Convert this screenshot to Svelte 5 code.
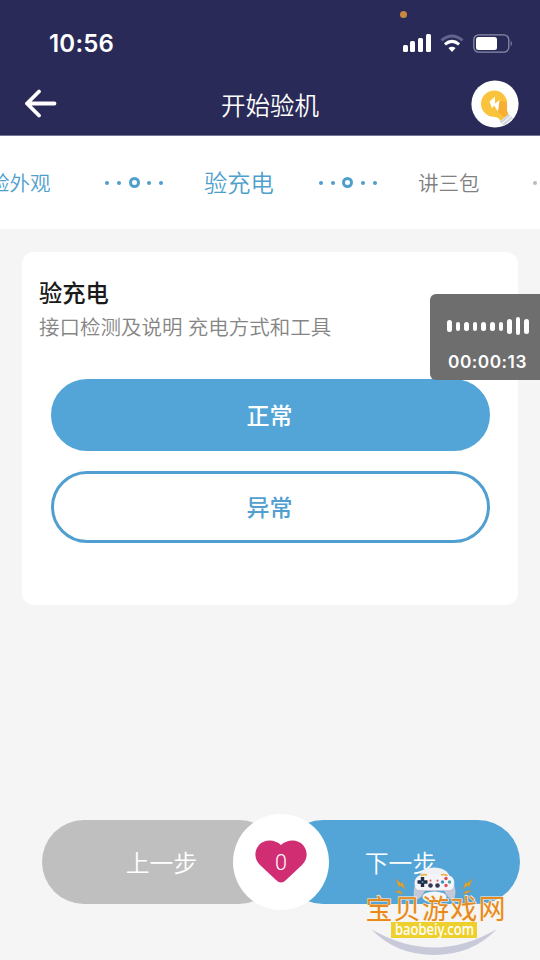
<script>
  const levels = [12, 9, 9, 9, 9, 9, 9, 15, 18, 15];
  const signal = [7, 11, 14, 18];
</script>

{#snippet dots()}
  <span class="dots"><i></i><i></i><b></b><i></i><i></i></span>
{/snippet}

<div class="screen">
  <header>
    <div class="status">
      <span class="time">10:56</span>
      <div class="indicators">
        <span class="signal">
          {#each signal as h}<i style="height:{h}px"></i>{/each}
        </span>
        <svg class="wifi" width="24" height="19" viewBox="0 0 24 19" fill="none">
          <path d="M1.4 6.3Q12-2.3 22.6 6.3" stroke="#64658c" stroke-width="3" />
          <path d="M4.9 10.4Q12 4.3 19.1 10.4" stroke="#fff" stroke-width="3" />
          <path d="M8.4 14.1Q12 11.3 15.6 14.1L12 18Z" fill="#fff" />
        </svg>
        <svg class="battery" width="40" height="19" viewBox="0 0 40 19">
          <rect x=".8" y=".8" width="35" height="17.4" rx="5" fill="none" stroke="#8b8ba8" stroke-width="1.3" />
          <rect x="3" y="3" width="21" height="13" rx="2.5" fill="#fff" />
          <path d="M37.7 6.5Q40 9.5 37.7 12.5Z" fill="#8b8ba8" />
        </svg>
      </div>
      <span class="mic"></span>
    </div>
    <div class="nav">
      <svg width="34" height="30" viewBox="0 0 34 30" fill="none" stroke="#fff" stroke-width="3.8" stroke-linecap="round" stroke-linejoin="round">
        <path d="M31.5 14.5H4M16 2.5 4 14.5 16 26.5" />
      </svg>
      <h1>开始验机</h1>
      <svg class="bulb" width="48" height="48" viewBox="0 0 48 48">
        <defs><clipPath id="disc"><circle cx="24" cy="24" r="23.6" /></clipPath></defs>
        <circle cx="24" cy="24" r="23.6" fill="#fff" />
        <g clip-path="url(#disc)">
          <path d="M23 10.5A13 13 0 0 1 36 22C36.5 28 35 30 37.5 34.5L29.5 41C27 36 24 37.5 20 36.5A13.2 13.2 0 0 1 23 10.5Z" fill="#f9c33b" />
          <path d="M28.5 21 35.8 22C36.5 28 35 30 37.5 34.5L33.5 37.7L27 31.5Z" fill="#f7ae32" />
          <path d="M24 16.5 18.5 21.5 21 28.5 23 25.5 27 31.5 28.5 20 24 23.5Z" fill="#fff" />
          <path d="m28.5 41.5 9-7.5 4.5 4-9 8Z" fill="#d3d8df" />
          <path d="m30.5 44 9.5-8" stroke="#fff" />
        </g>
      </svg>
    </div>
  </header>

  <nav class="steps">
    <span class="step prev">验外观</span>
    {@render dots()}
    <span class="step current">验充电</span>
    {@render dots()}
    <span class="step next">讲三包</span>
    <span class="dots off"><i></i><i></i></span>
  </nav>

  <main>
    <section class="card">
      <h2>验充电</h2>
      <p>接口检测及说明 充电方式和工具</p>
      <button class="choice filled">正常</button>
      <button class="choice">异常</button>
    </section>
  </main>

  <footer>
    <button class="back">上一步</button>
    <button class="forward">下一步</button>
    <div class="heart">
      <svg width="52" height="44" viewBox="0 0 52 44">
        <path d="M26 5C20-1 9-1 4 5C-1 11-1 19 5 25L21 40Q26 45 31 40L47 25C53 19 53 11 48 5C43-1 32-1 26 5Z" fill="#d12d73" />
      </svg>
      <span>0</span>
    </div>
  </footer>

  <aside class="recorder">
    <div class="wave">
      {#each levels as h}<i style="height:{h}px"></i>{/each}
    </div>
    <time>00:00:13</time>
  </aside>

  <svg class="watermark" width="160" height="100" viewBox="360 860 160 100">
    <path d="M371 929Q434 966 497 929Q472 955 434 955Q396 955 371 929Z" fill="#c8cada" />
    <g>
      <path d="M419 878C421 864 448 864 450 878V884H419Z" fill="#f0f1f5" />
      <path d="M417 880C423 876 446 876 452 880C455 886 457 893 454 899Q451 901 448 897L444 891H425L421 897Q417 901 414 898C413 892 414 886 417 880Z" fill="#c5c8d7" />
      <path d="M420 875.5C426 874 443 874 449 875.5C456 877 456 889 450 890C443 890 426 890 419 890C413 889 413 877 420 875.5Z" fill="#f5f5f9" />
      <ellipse cx="434.5" cy="897" rx="12" ry="5.5" fill="#f6f6f8" />
      <path d="M417.5 882H427.5M422.5 877V887" stroke="#202c48" stroke-width="3.4" />
      <circle cx="422.5" cy="882" r="1" fill="#64a2bf" />
      <circle cx="446" cy="878.5" r="1.7" fill="#df4b5b" /><circle cx="446" cy="885.5" r="1.7" fill="#df4b5b" />
      <circle cx="442.5" cy="882" r="1.7" fill="#3d91bf" /><circle cx="449.5" cy="882" r="1.7" fill="#48a8a3" />
      <circle cx="430.5" cy="885.5" r="2.3" fill="#343753" /><circle cx="437.5" cy="885.5" r="2.3" fill="#343753" />
      <circle cx="430.5" cy="880.7" r="1.1" fill="#d66" /><circle cx="437.5" cy="880.7" r="1.1" fill="#d66" />
      <path d="M420.5 875.8Q423 874 427 874.8M441 874.8Q445 874 447.5 875.8" fill="none" stroke="#e9b449" stroke-width="1.7" />
    </g>
    <path d="m396 879 5 5 1-2 3 7-5-4-1 2ZM472 879l-5 5-1-2-3 7 5-4 1 2ZM395 891l5 0 3 3-4-1ZM471 891l-5 0-3 3 4-1Z" fill="#e7aa30" stroke="#c89134" stroke-width=".7" />
    <rect x="391" y="922" width="86" height="16" fill="#eed02d" />
    <text x="365.5" y="918.5" textLength="140" class="brand">宝贝游戏网</text>
    <text x="395" y="934.5" textLength="79" lengthAdjust="spacingAndGlyphs" class="site">baobeiy.com</text>
  </svg>
</div>

<style>
  :global(body) { margin: 0; background: #f5f5f5; }
  .screen { position: relative; width: 540px; height: 960px; overflow: hidden; background: #f5f5f5; display: flex; flex-direction: column; font-family: "Noto Sans CJK SC", sans-serif; font-weight: 350; }
  * { box-sizing: border-box; }
  h1, h2, p { margin: 0; }
  button { border: 0; padding: 0; font: inherit; }
  header { height: 136px; background: #292a58; border-bottom: 1px solid #75769a; display: flex; flex-direction: column; flex: none; }
  .status { position: relative; height: 76px; padding: 10px 27px 0 49px; display: flex; align-items: center; justify-content: space-between; }
  .time { font: 600 24px/30px Inter, sans-serif; color: #fff; letter-spacing: .2px; padding-top: 2px; }
  .indicators { display: flex; align-items: center; }
  .signal { display: flex; align-items: flex-end; gap: 2.8px; margin-right: 9px; }
  .signal i { width: 5px; border-radius: 1.5px; background: #fff; }
  .battery { margin-left: 9px; }
  .mic { position: absolute; left: 400px; top: 11px; width: 7px; height: 7px; border-radius: 50%; background: #c7883f; }
  .nav { height: 56px; padding: 0 21px 0 23px; display: flex; align-items: center; justify-content: space-between; }
  h1 { font-size: 24.5px; line-height: 36px; font-weight: 350; color: #fff; padding: 1px 0 0 12px; }
  .steps { height: 93px; flex: none; background: #fff; display: flex; align-items: center; color: #4f9fcd; white-space: nowrap; }
  .step { font-size: 20.5px; flex: none; padding-bottom: 1px; }
  .prev { margin-left: -11px; width: 116px; }
  .current { font-size: 23.3px; margin: 0 45px 0 41px; }
  .next { color: #808080; margin: 0 54px 0 41px; }
  .dots { display: flex; align-items: center; justify-content: space-between; width: 58px; flex: none; }
  .dots i { width: 4px; height: 4px; border-radius: 50%; background: currentColor; }
  .dots b { width: 11px; height: 11px; border: 3px solid currentColor; border-radius: 50%; }
  .off { color: #bbb; }
  main { padding: 23px 22px 0; flex: 1; }
  .card { height: 353px; border-radius: 12px; background: #fff; padding: 23px 29px 0; }
  h2 { font-size: 23.3px; line-height: 34px; font-weight: 500; color: #1a1a1a; margin-left: -12px; }
  p { font-size: 20.5px; line-height: 34px; color: #858585; margin-left: -12px; white-space: nowrap; word-spacing: .8px; }
  .choice { display: block; width: 439px; height: 72px; margin-top: 20px; border: 3px solid #519fd0; border-radius: 36px; background: #fff; color: #519fd0; font-size: 23px; font-weight: 500; padding: 0 2px 2px 0; }
  .filled { margin-top: 36px; background: #53a5d8; border-color: #53a5d8; color: #fff; }
  footer { height: 140px; flex: none; padding: 0 20px 0 42px; display: flex; position: relative; }
  footer button { width: 239px; height: 84px; border-radius: 42px; color: #fff; font-size: 23.8px; font-weight: 350; padding-bottom: 2px; }
  .back { background: #bfbfbf; }
  .forward { background: #53a5d8; }
  .heart { position: absolute; left: 233px; top: -6px; width: 96px; height: 96px; border-radius: 50%; background: #fff; display: grid; place-items: center; }
  .heart > * { grid-area: 1 / 1; }
  .heart span { color: #fff; font: 300 21.5px/24px Roboto, sans-serif; padding-top: 1px; }
  .recorder { position: absolute; left: 430px; top: 294px; width: 110px; height: 86px; border-radius: 6px 0 0 6px; background: #6e6e6e; padding: 22px 11px 0 17px; }
  .wave { height: 20px; display: flex; align-items: center; justify-content: space-between; }
  .wave i { width: 4.5px; border-radius: 2.5px; background: #fff; }
  time { display: block; margin: 15px 0 0 1px; color: #fff; font: 600 17.3px/22px Inter, sans-serif; letter-spacing: .5px; white-space: nowrap; }
  .watermark { position: absolute; left: 360px; top: 860px; }
  .brand { font-size: 27px; font-weight: 400; fill: #e68a20; stroke: #fff2dc; stroke-width: 1.2px; paint-order: stroke; }
  .site { font: 500 15.5px "Noto Sans", sans-serif; fill: #fff; }
</style>
